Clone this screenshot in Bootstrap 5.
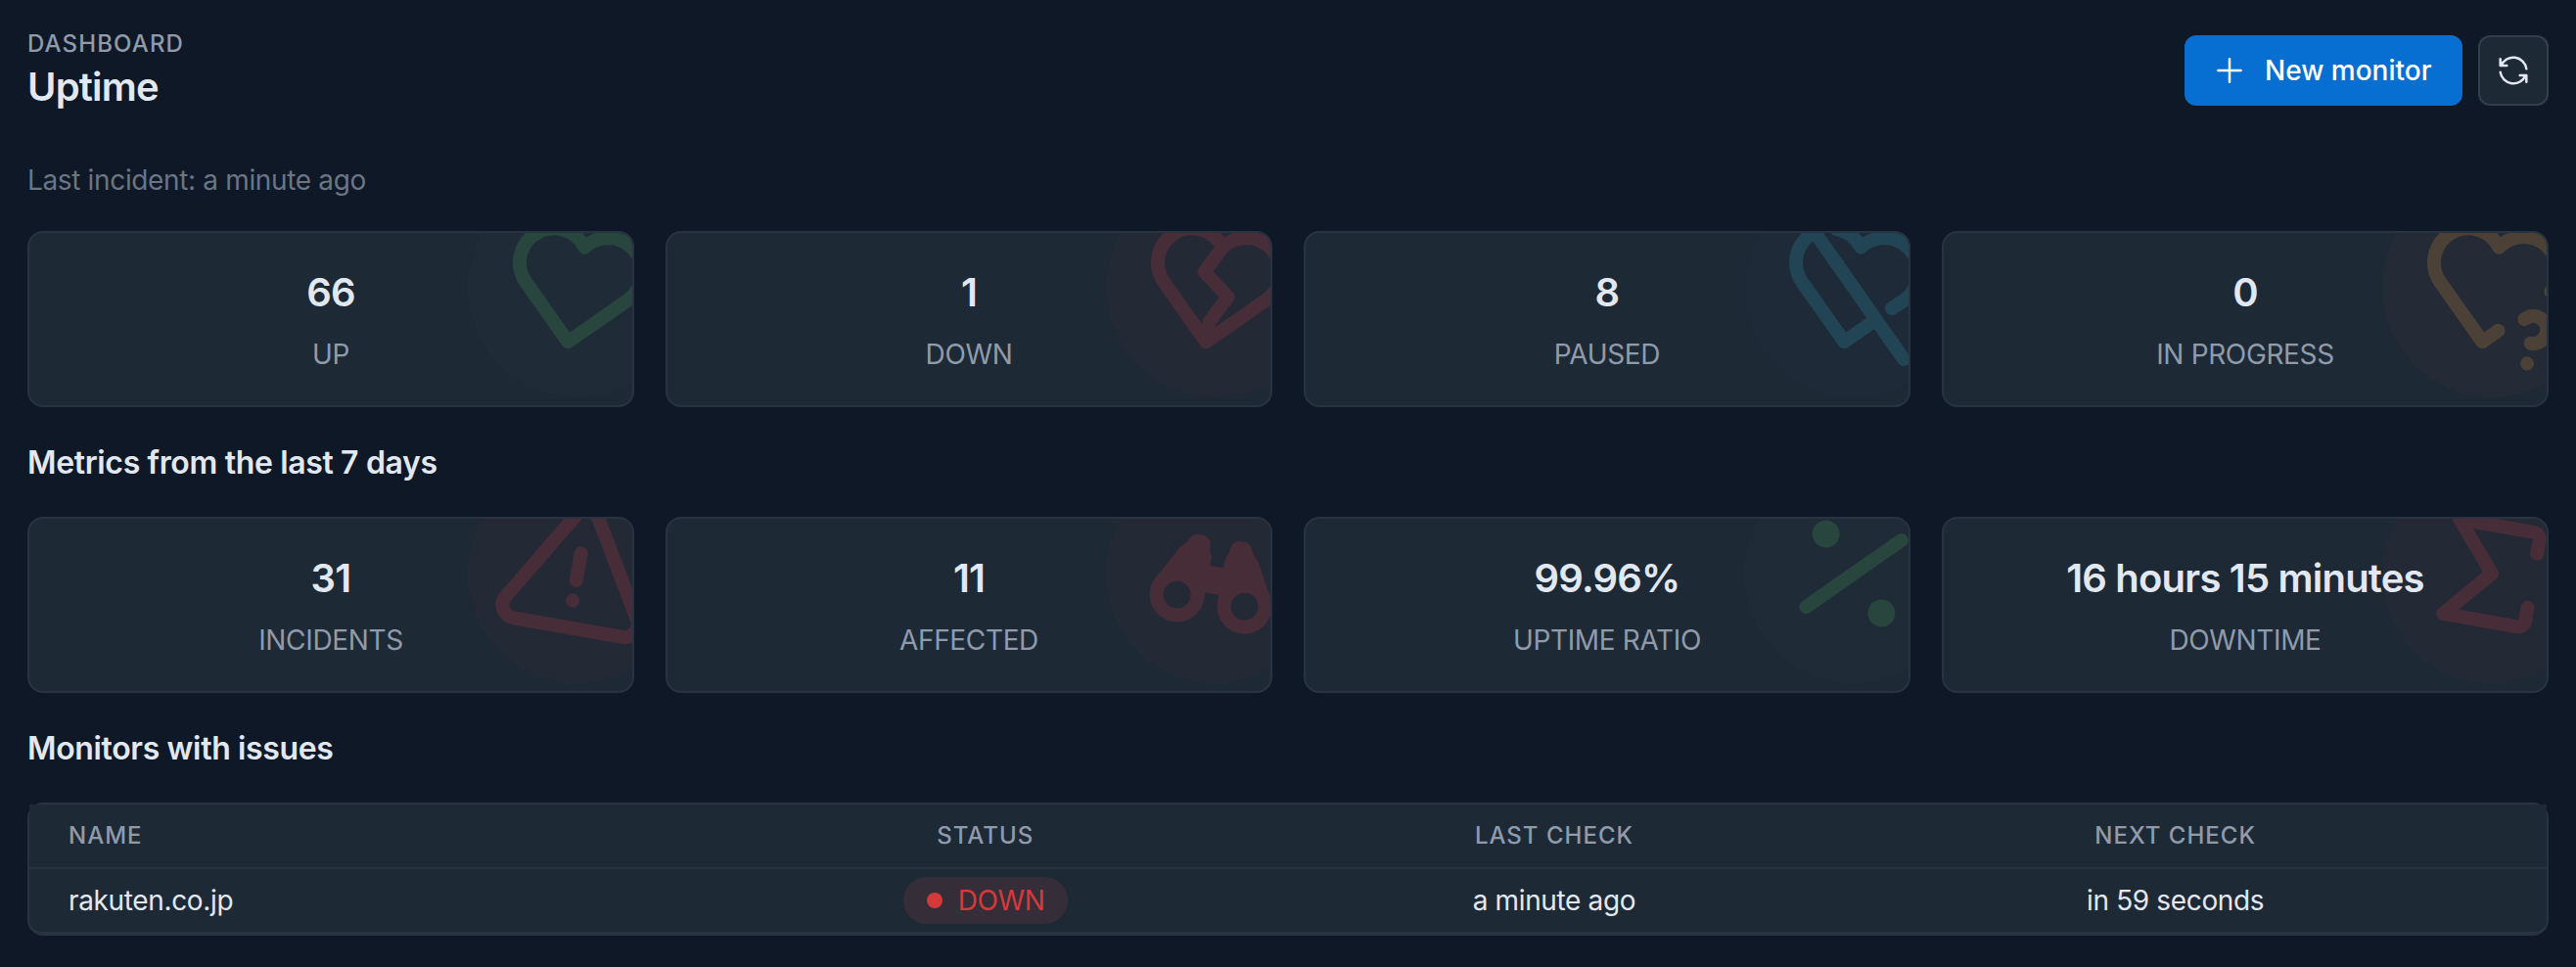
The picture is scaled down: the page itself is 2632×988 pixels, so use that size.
<!DOCTYPE html>
<html lang="en" data-bs-theme="dark">
<head>
<meta charset="utf-8">
<meta name="viewport" content="width=device-width, initial-scale=1">
<title>Uptime</title>
<link rel="stylesheet" href="https://cdn.jsdelivr.net/npm/bootstrap@5.3.0/dist/css/bootstrap.min.css">
<style>
  :root { --surface: #1e2936; --line: #283442; --ink: #e2e8f2; --soft: #8f9bab; }
  body { background: #0e1826; color: var(--ink); font-family: Inter, "Liberation Sans", sans-serif; font-size: 28px; line-height: 40px; letter-spacing: -.0125em; overflow: hidden; }
  .page { padding: 28px; }
  .page-head { height: 88px; margin-bottom: 48px; }
  .head-text { padding-top: 2px; }
  .pretitle { font-size: 24px; line-height: 32px; letter-spacing: .047em; color: var(--soft); font-weight: 500; }
  .title { font-size: 40px; line-height: 56px; font-weight: 600; letter-spacing: -.02em; color: var(--ink); }
  .btn { --bs-btn-font-size: 28px; --bs-btn-line-height: 40px; --bs-btn-font-weight: 500; --bs-btn-border-radius: 12px; --bs-btn-border-width: 2px; height: 72px; }
  .btn-new { --bs-btn-bg: #066fd1; --bs-btn-border-color: #066fd1; --bs-btn-color: #fff; width: 284px; padding: 0 24px; gap: 16px; white-space: nowrap; }
  .btn-reload { --bs-btn-bg: var(--surface); --bs-btn-border-color: #343f4c; --bs-btn-color: var(--ink); width: 72px; padding: 0; }
  .line-icon { width: 40px; height: 40px; fill: none; stroke: currentColor; stroke-width: 1.5; stroke-linecap: round; stroke-linejoin: round; flex: none; }
  .incident { color: #6b7583; margin-bottom: 32px; }
  .section { font-size: 32px; height: 48px; line-height: 48px; padding-top: 1px; font-weight: 600; margin: 32px 0; letter-spacing: -.011em; color: var(--ink); }
  .tiles { --bs-gutter-x: 32px; }
  .card { --bs-card-bg: var(--surface); --bs-card-border-color: var(--line); --bs-card-border-width: 2px; --bs-card-border-radius: 16px; --bs-card-inner-border-radius: 14px; --bs-card-color: var(--ink); }
  .tile { height: 180px; overflow: hidden; padding: 32px; text-align: center; }
  .figure-value { font-size: 40px; line-height: 56px; font-weight: 600; padding-top: 1px; margin-bottom: 15px; position: relative; z-index: 1; letter-spacing: -.02em; }
  .figure-label { color: var(--soft); }
  .stamp { position: absolute; top: -56px; right: -56px; width: 224px; height: 224px; border-radius: 50%; transform: rotate(10deg); display: flex; align-items: center; justify-content: center; }
  .stamp svg { width: 168px; height: 168px; fill: none; stroke: currentColor; stroke-width: 2; stroke-linecap: round; stroke-linejoin: round; }
  .tone-green { background: #1f2c37; color: #28463e; }
  .tone-red { background: #242936; color: #462d37; }
  .tone-blue { background: #1e2a37; color: #214554; }
  .tone-amber { background: #242a36; color: #4b4136; }
  .list-card { height: 136px; }
  .monitors { margin: 0; table-layout: fixed; border-collapse: separate; border-spacing: 0; --bs-table-bg: var(--surface); --bs-table-color: var(--ink); border-color: var(--line); }
  .monitors th, .monitors td { height: 66px; padding: 0 40px; border-width: 0 0 2px; vertical-align: middle; text-align: center; line-height: 40px; }
  .monitors th { font-size: 24px; line-height: 32px; font-weight: 500; letter-spacing: .042em; color: var(--soft); }
  .monitors tr > :first-child { text-align: left; }
  .monitors tbody tr:last-child td:first-child { border-bottom-left-radius: 14px; }
  .monitors tbody tr:last-child td:last-child { border-bottom-right-radius: 14px; }
  .status { width: 168px; height: 48px; gap: 16px; padding-left: 24px; background: #352e39; color: #d63939; vertical-align: middle; }
  .status-dot { width: 16px; height: 16px; background: #d63939; }
</style>
</head>
<body>
<main class="page">
  <header class="page-head d-flex align-items-center justify-content-between">
    <div class="head-text">
      <div class="pretitle text-uppercase">Dashboard</div>
      <h1 class="title m-0">Uptime</h1>
    </div>
    <div class="d-flex gap-3">
      <button class="btn btn-new d-inline-flex align-items-center" type="button">
        <svg class="line-icon" viewBox="0 0 24 24"><path d="M12 5v14M5 12h14"/></svg>New monitor
      </button>
      <button class="btn btn-reload d-inline-flex align-items-center justify-content-center" type="button" aria-label="Refresh">
        <svg class="line-icon" viewBox="0 0 24 24"><path d="M20 11a8.1 8.1 0 0 0-15.5-2M4 5v4h4"/><path d="M4 13a8.1 8.1 0 0 0 15.5 2M20 19v-4h-4"/></svg>
      </button>
    </div>
  </header>

  <div class="incident">Last incident: a minute ago</div>

  <div class="row tiles">
    <div class="col-3"><div class="card tile">
      <div class="stamp tone-green"><svg viewBox="0 0 24 24"><path d="M19.5 12.572l-7.5 7.428l-7.5-7.428a5 5 0 1 1 7.5-6.566a5 5 0 1 1 7.5 6.572"/></svg></div>
      <div class="figure-value">66</div><div class="figure-label">UP</div>
    </div></div>
    <div class="col-3"><div class="card tile">
      <div class="stamp tone-red"><svg viewBox="0 0 24 24"><path d="M19.5 12.572l-7.5 7.428l-7.5-7.428a5 5 0 1 1 7.5-6.566a5 5 0 1 1 7.5 6.572"/><path d="M12 6l-2 4l4 3l-2 4v3"/></svg></div>
      <div class="figure-value">1</div><div class="figure-label">DOWN</div>
    </div></div>
    <div class="col-3"><div class="card tile">
      <div class="stamp tone-blue"><svg viewBox="0 0 24 24"><path d="M3 3l18 18"/><path d="M19.5 12.572l-1.5 1.428m-2 2l-4 4l-7.5-7.428a5 5 0 0 1-1.288-5.068a4.976 4.976 0 0 1 1.788-2.504m3-1c1.56 0 3.05.727 4 2a5 5 0 1 1 7.5 6.572"/></svg></div>
      <div class="figure-value">8</div><div class="figure-label">PAUSED</div>
    </div></div>
    <div class="col-3"><div class="card tile">
      <div class="stamp tone-amber"><svg viewBox="0 0 24 24"><path d="M14.01 18l-2.01 2l-7.5-7.428a5 5 0 1 1 7.5-6.566a5 5 0 0 1 8.6 5.06"/><path d="M19 22v.01"/><path d="M19 19a2.003 2.003 0 0 0 .914-3.782a1.98 1.98 0 0 0-2.414.483"/></svg></div>
      <div class="figure-value">0</div><div class="figure-label">IN PROGRESS</div>
    </div></div>
  </div>

  <h2 class="section">Metrics from the last 7 days</h2>

  <div class="row tiles">
    <div class="col-3"><div class="card tile">
      <div class="stamp tone-red"><svg viewBox="0 0 24 24"><path d="M12 9v4M12 16v.01"/><path d="M10.363 3.591l-8.106 13.534a1.914 1.914 0 0 0 1.636 2.871h16.214a1.914 1.914 0 0 0 1.636-2.87l-8.106-13.536a1.914 1.914 0 0 0-3.274 0z"/></svg></div>
      <div class="figure-value">31</div><div class="figure-label">INCIDENTS</div>
    </div></div>
    <div class="col-3"><div class="card tile">
      <div class="stamp tone-red"><svg viewBox="0 0 24 24"><circle cx="7" cy="16" r="3"/><circle cx="17" cy="16" r="3"/><path fill="currentColor" d="M19.761 14.813l-2.84-5.133c-.189-.31-.592-.68-1.421-.68c-.828 0-1.5.448-1.5 1v6a3 3 0 0 1 5.761-1.187z"/><path fill="currentColor" d="M4.239 14.813l2.84-5.133c.189-.31.592-.68 1.421-.68c.828 0 1.5.448 1.5 1v6a3 3 0 0 0-5.761-1.187z"/><path d="M16.346 9.17l-.729-1.261c-.16-.248-1.056-.203-1.117.091l-.177 1.38"/><path d="M7.654 9.17l.729-1.261c.16-.249 1.056-.203 1.117.091l.177 1.38"/><path d="M10 12h4v2h-4z"/></svg></div>
      <div class="figure-value">11</div><div class="figure-label">AFFECTED</div>
    </div></div>
    <div class="col-3"><div class="card tile">
      <div class="stamp tone-green"><svg viewBox="0 0 24 24"><circle cx="17" cy="17" r="1"/><circle cx="7" cy="7" r="1"/><path d="M6 18l12-12"/></svg></div>
      <div class="figure-value">99.96%</div><div class="figure-label">UPTIME RATIO</div>
    </div></div>
    <div class="col-3"><div class="card tile">
      <div class="stamp tone-red"><svg viewBox="0 0 24 24"><path d="M18 16v2a1 1 0 0 1-1 1h-11l6-7l-6-7h11a1 1 0 0 1 1 1v2"/></svg></div>
      <div class="figure-value">16 hours 15 minutes</div><div class="figure-label">DOWNTIME</div>
    </div></div>
  </div>

  <h2 class="section">Monitors with issues</h2>

  <div class="card list-card">
    <table class="table monitors">
      <colgroup><col style="width:25.3%"><col style="width:25.35%"><col style="width:19.85%"><col style="width:29.5%"></colgroup>
      <thead><tr><th>NAME</th><th>STATUS</th><th>LAST CHECK</th><th>NEXT CHECK</th></tr></thead>
      <tbody><tr>
        <td>rakuten.co.jp</td>
        <td><span class="status d-inline-flex align-items-center rounded-pill"><span class="status-dot rounded-circle"></span>DOWN</span></td>
        <td>a minute ago</td>
        <td>in 59 seconds</td>
      </tr></tbody>
    </table>
  </div>
</main>
<script src="https://cdn.jsdelivr.net/npm/bootstrap@5.3.0/dist/js/bootstrap.bundle.min.js"></script>
</body>
</html>
